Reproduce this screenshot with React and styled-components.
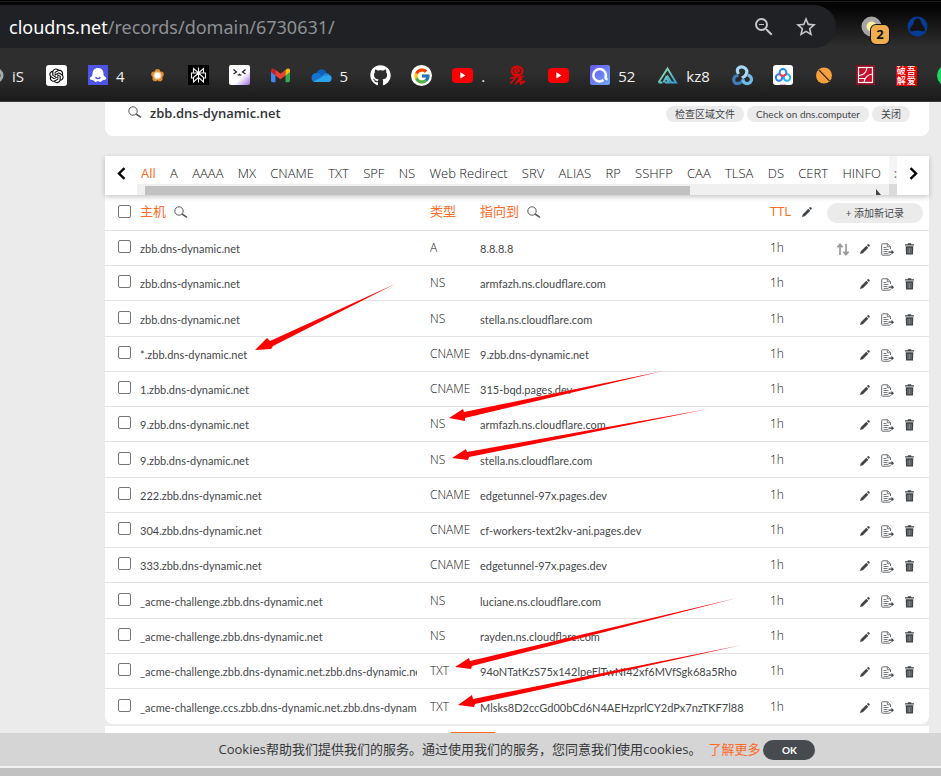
import React from "react";
import styled, { createGlobalStyle, css } from "styled-components";
import { AiOutlineOpenAI } from "react-icons/ai";
import { FaGithub } from "react-icons/fa";
import { FcGoogle } from "react-icons/fc";
import { MdZoomOut, MdOutlineStarBorder } from "react-icons/md";

const cjk = '"Noto Sans CJK SC", sans-serif';
const orange = "#ff6a24";
const ink = "#45484b";

const GlobalStyle = createGlobalStyle`
  * { box-sizing: border-box; }
  body { margin: 0; background: #ebebeb; color: ${ink}; font-family: Lato, ${cjk}; }
  button { border: 0; padding: 0; background: none; color: inherit; font: inherit; cursor: pointer; }
  svg { display: block; flex: none; }
`;

const Page = styled.div`
  position: relative;
  display: flex;
  flex-direction: column;
  height: 100vh;
  overflow: hidden;
`;

/* Browser chrome */

const Chrome = styled.header`
  flex: none;
  font-family: "Open Sans", ${cjk};
  background: linear-gradient(#000 0, #060606 8px, #2e2e2e 46px, #2e2e2e 72px, #1b1b1b 100%);
  border-top: 1px solid #000;
  border-bottom: 1px solid #3a3838;
`;

const TabStrip = styled.div`
  height: 4px;
  background: #050505;
  border-top: 1px solid #1d1d1d;
`;

const Toolbar = styled.div`
  display: flex;
  align-items: center;
  height: 43px;
  padding-right: 13px;
`;

const Omnibox = styled.div`
  display: flex;
  flex: 1;
  align-items: center;
  gap: 18px;
  height: 43px;
  margin-right: 25px;
  padding: 0 18px 0 9px;
  border-radius: 0 22px 22px 0;
  background: #202124;
  color: #c4c7ca;
`;

const Address = styled.div`
  flex: 1;
  color: #8d9094;
  font-family: "Noto Sans", ${cjk};
  font-size: 18px;
  line-height: 24px;
`;

const Host = styled.span`
  color: #fff;
`;

const Extensions = styled.div`
  display: flex;
  align-items: center;
  gap: 14px;
`;

const ExtensionButton = styled.button`
  position: relative;
  display: flex;
  align-items: center;
`;

const Badge = styled.span`
  position: absolute;
  left: 10px;
  top: 9px;
  width: 18px;
  height: 19px;
  border-radius: 5px;
  background: #f0ad4e;
  box-shadow: 0 0 0 1px #111;
  color: #111;
  font-size: 13px;
  font-weight: 700;
  line-height: 19px;
  text-align: center;
`;

const Bookmarks = styled.nav`
  display: flex;
  align-items: center;
  gap: 20px;
  height: 53px;
  padding-top: 2px;
  overflow: hidden;
`;

const Bookmark = styled.a`
  display: flex;
  flex: none;
  align-items: center;
  gap: 8px;
  color: #f1f1f1;
  font-size: 15px;
  line-height: 20px;
  text-decoration: none;
`;

const BookmarkLabel = styled.span`
  padding-right: 2px;
`;

/* Site content */

const Content = styled.main`
  flex: 1;
  min-height: 0;
  overflow: hidden;
  padding: 0 12px 0 105px;
`;

const DomainCard = styled.section`
  display: flex;
  align-items: flex-start;
  gap: 8px;
  height: 34px;
  padding: 4px 19px 0 23px;
  border-radius: 0 0 8px 8px;
  background: #fff;
`;

const DomainName = styled.h1`
  flex: 1;
  margin: 0;
  font-family: "Open Sans", ${cjk};
  font-size: 13px;
  font-weight: 600;
  line-height: 14px;
  color: #303336;
`;

const PillGroup = styled.div`
  display: flex;
  gap: 3px;
`;

const Pill = styled.button`
  height: ${(p) => (p.$tall ? 20 : 16)}px;
  padding: 0 ${(p) => (p.$tall ? 19 : 9)}px;
  border-radius: 10px;
  background: #ebebeb;
  color: ${ink};
  font-size: 10px;
  line-height: 16px;
  white-space: nowrap;
`;

const TypeBar = styled.nav`
  position: relative;
  display: flex;
  height: 39px;
  margin-top: 20px;
  background: #fff;
  box-shadow: 0 2px 5px rgba(0, 0, 0, 0.22);
`;

const ScrollButton = styled.button`
  display: flex;
  flex: none;
  align-items: center;
  justify-content: center;
  width: 32px;
  padding-bottom: 4px;
  color: #000;
`;

const TypeArea = styled.div`
  display: flex;
  flex: 1;
  flex-direction: column;
  min-width: 0;
`;

const TypeList = styled.div`
  display: flex;
  justify-content: space-between;
  gap: 8px;
  height: 28px;
  padding: 0 8px 0 4px;
  overflow: hidden;
`;

const TypeLink = styled.a`
  color: ${(p) => (p.$active ? orange : "#111315")};
  font-family: "Open Sans", ${cjk};
  font-size: 13px;
  font-weight: ${(p) => (p.$active ? 400 : 300)};
  line-height: 34px;
  text-decoration: none;
  white-space: nowrap;
`;

const ScrollTrack = styled.div`
  display: flex;
  justify-content: space-between;
  height: 11px;
  padding: 2px 8px 0 8px;
  background: #f0f0f0;
`;

const ScrollThumb = styled.div`
  width: 74%;
  background: #c1c1c1;
`;

const ScrollEdge = styled.div`
  flex: none;
  width: 8px;
  background: linear-gradient(#f5f5f5 28px, #dadada 28px);
  color: #777;
  font-size: 13px;
  line-height: 34px;
  text-align: right;
`;

const Table = styled.table`
  width: 100%;
  table-layout: fixed;
  border-collapse: separate;
  border-spacing: 0;
  border-radius: 0 0 8px 8px;
  background: #fff;
`;

const Row = styled.tr`
  height: 35px;
  &:nth-child(4n + 3) { height: 36px; }
  &:last-child > td { border-bottom: 0; }
`;

const cell = css`
  padding: 0;
  border-bottom: 1px solid #e3e3e3;
  text-align: left;
  white-space: nowrap;
`;

const HeadCell = styled.th`
  ${cell}
  width: ${(p) => p.$w || "auto"};
  height: 36px;
  color: ${orange};
  font-family: "Open Sans", ${cjk};
  font-size: 13px;
  font-weight: 400;
  line-height: 20px;
`;

const HeadLabel = styled.span`
  display: flex;
  align-items: center;
  gap: ${(p) => p.$gap || 8}px;
  padding-bottom: 4px;
  color: ${orange};
`;

const HeadIcon = styled.button`
  padding-top: 2px;
  color: ${ink};
`;

const Cell = styled.td`
  ${cell}
  padding-top: ${(p) => (p.$raised ? 0 : 2)}px;
  font-size: 11px;
  line-height: 16px;
`;

const CheckCell = styled.td`
  ${cell}
  padding: 0 0 3px 13px;
`;

const CheckPad = styled.label`
  display: block;
  padding: 0 0 2px 13px;
`;

const Clip = styled.span`
  display: block;
  margin-right: 13px;
  overflow: hidden;
`;

const TypeText = styled.span`
  color: #111315;
  font-family: "Open Sans", ${cjk};
  font-size: 12px;
  font-weight: 300;
`;

const Check = styled.input`
  display: block;
  appearance: none;
  width: 13px;
  height: 13px;
  margin: 0;
  border: 1px solid #767676;
  border-radius: 2px;
  background: #fff;
  &:checked { background: ${orange}; }
`;

const Actions = styled.div`
  display: flex;
  align-items: center;
  justify-content: flex-end;
  gap: 11px;
  padding-right: 15px;
`;

const HeadActions = styled.div`
  display: flex;
  justify-content: flex-end;
  padding: 1px 6px 0 0;
`;

const NextCard = styled.section`
  display: flex;
  align-items: flex-end;
  height: 14px;
  margin-top: 2px;
  padding: 0 345px;
  background: #fff;
`;

const Accent = styled.div`
  width: 46px;
  height: 8px;
  border-radius: 2px 2px 0 0;
  background: ${orange};
`;

const CookieBar = styled.footer`
  display: flex;
  flex: none;
  align-items: center;
  justify-content: center;
  gap: 3px;
  height: 33px;
  padding: 0 12px 2px 105px;
  background: #d5d5d5;
  color: #36393b;
  font-family: "Open Sans", ${cjk};
  font-size: 13px;
  line-height: 20px;
  white-space: nowrap;
`;

const MoreLink = styled.a`
  margin-left: 4px;
  color: ${orange};
  text-decoration: none;
`;

const OkButton = styled.button`
  width: 52px;
  height: 20px;
  margin-top: 2px;
  border-radius: 10px;
  background: #474b4f;
  color: #fff;
  font-family: Lato, ${cjk};
  font-size: 10px;
  font-weight: 700;
`;

const WindowScroll = styled.div`
  flex: none;
  height: 10px;
  border-top: 2px solid #f1f1f1;
  background: #c1c1c1;
`;

const Arrows = styled.svg`
  position: absolute;
  left: 0;
  top: 0;
  pointer-events: none;
`;

/* Small drawings */

const IconTile = styled.span`
  display: flex;
  align-items: center;
  justify-content: center;
  width: 21px;
  height: 21px;
  border-radius: ${(p) => (p.$round ? 11 : 3)}px;
  background: ${(p) => p.$bg};
`;

const Seal = styled.span`
  display: grid;
  grid-template-columns: 10px 10px;
  justify-content: center;
  width: 21px;
  height: 20px;
  background: #e60000;
  color: #fff;
  font-family: ${cjk};
  font-size: 9px;
  font-weight: 500;
  line-height: 10px;
  text-align: center;
`;

const Glyph = ({ w = 21, h = 21, box = "0 0 21 21", children }) => (
  <svg width={w} height={h} viewBox={box} aria-hidden="true">{children}</svg>
);

const SearchIcon = () => (
  <Glyph w={14} h={12} box="0 0 14 12">
    <circle cx="5" cy="5" r="4.2" fill="none" stroke="#55585b" />
    <path d="M8 8l5 3.3" stroke="#55585b" strokeWidth="1.5" />
  </Glyph>
);

const PencilIcon = () => (
  <Glyph w={10} h={10} box="0 0 10 10">
    <path d="M0 10l.8-2.8L6.300 1.700l2 2L2.800 9.200zM6.900 1.100L7.800.3q.6-.4 1.200.1l.6.7q.4.6 0 1l-.8.9z" fill="#414548" />
  </Glyph>
);

const CopyIcon = () => (
  <Glyph w={13} h={13} box="0 0 13 13">
    <path d="M9.500 6V3.700L6.500 .8H1.700Q.7.8.7 1.800v9.400q0 1 1 1h6.800q1 0 1-1" fill="none" stroke="#6a6d70" />
    <path d="M6.300.8v3h3M2.500 4.500h3M2.500 6.500h5M2.500 8.500h4M2.500 10.400h5" fill="none" stroke="#6a6d70" strokeWidth=".9" />
    <path d="M7.500 8.600h3V6.800L13 9.200l-2.500 2.300V9.800h-3z" fill="#414548" />
  </Glyph>
);

const TrashIcon = () => (
  <Glyph w={9} h={12} box="0 0 9 12">
    <path d="M0 1.200h2.800V.3h3.400v.9H9v1.300H0zM.7 3.300h7.600l-.3 8.200H1z" fill="#414548" />
    <path d="M3 4.800v5.400M4.500 4.800v5.400M6 4.800v5.400" stroke="#aaadb0" strokeWidth=".6" />
  </Glyph>
);

const SwapIcon = () => (
  <Glyph w={12} h={13} box="0 0 12 13">
    <path d="M3 12V2M.4 4.400L3 1.400l2.600 3M9 1v10M6.400 8.600l2.600 3 2.600-3" fill="none" stroke="#9b9b9b" strokeWidth="1.700" />
  </Glyph>
);

const Chevron = ({ d }) => (
  <Glyph w={9} h={13} box="0 0 9 13">
    <path d={d} fill="none" stroke="#000" strokeWidth="2.400" />
  </Glyph>
);

const YouTube = () => (
  <Glyph>
    <rect y="3" width="21" height="15" rx="4" fill="#f00" />
    <path d="M8.300 7.200v6.400l5.300-3.200z" fill="#fff" />
  </Glyph>
);

const OpenAi = () => (
  <IconTile $bg="#fff"><AiOutlineOpenAI size={19} color="#111" /></IconTile>
);

const Ghost = () => (
  <Glyph>
    <rect x="1" width="20" height="20" fill="#4f54e8" />
    <path d="M11 3c3.600 0 5.500 2.500 5.500 5.500 0 1.800.5 2.800 1.500 3.300 1.600.8 1.800 2.700 0 3-1.200.2-2 .2-2.800 1-.8.9-1.600 1.500-2.600.9-.6-.4-1-.4-1.600-.4s-1 0-1.600.4c-1 .6-1.800 0-2.600-.9-.8-.8-1.600-.8-2.800-1-1.800-.3-1.600-2.200 0-3 1-.5 1.500-1.500 1.500-3.300C5.500 5.500 7.400 3 11 3z" fill="#fff" />
    <path d="M8.500 12.300q2.500 2.600 5 0" fill="none" stroke="#4f54e8" strokeWidth="1.400" />
  </Glyph>
);

const Flower = () => (
  <Glyph>
    <g fill="#e08a2c">
      <circle cx="10.500" cy="6.800" r="2.800" /><circle cx="14" cy="9.300" r="2.800" /><circle cx="12.800" cy="13.400" r="2.800" />
      <circle cx="8.200" cy="13.400" r="2.800" /><circle cx="7" cy="9.300" r="2.800" />
    </g>
    <circle cx="10.500" cy="10.500" r="4" fill="#f3c79a" /><circle cx="10.500" cy="10.500" r="2.800" fill="#fff" />
  </Glyph>
);

const Perplexity = () => (
  <Glyph>
    <rect width="21" height="20" fill="#000" />
    <path d="M10.500 2.500v15M10.500 8L5.500 3.500V8M10.500 8l5-4.500V8M5.500 13H3.500V8h14v5h-2M10.500 8l-5 4.500v4.500l5-4.500M10.500 8l5 4.500v4.500l-5-4.500" fill="none" stroke="#f2f2f2" strokeWidth="1.100" />
  </Glyph>
);

const Face = () => (
  <Glyph>
    <defs><linearGradient id="face" x1="0" y1="0" x2="1" y2="1"><stop offset=".6" stopColor="#fff" /><stop offset="1" stopColor="#9a6ee0" /></linearGradient></defs>
    <rect width="21" height="20" rx="2" fill="url(#face)" />
    <path d="M4.500 4.500l3 2.500-3 2M16.500 4.500l-3 2.500 3 2M8.800 9.500q.8 1.300 1.700 0 .9 1.300 1.700 0" fill="none" stroke="#25243a" strokeWidth="1.300" />
  </Glyph>
);

const Gmail = () => (
  <Glyph>
    <path d="M1 6v9.500q0 1.800 1.500 1.800h3V9z" fill="#4285f4" />
    <path d="M15.500 9v8.300h3q1.500 0 1.500-1.800V6z" fill="#34a853" />
    <path d="M1 5q.5-2 3-1.200L5.500 5v5.500L1 7z" fill="#c5221f" />
    <path d="M5.500 4.800l5 4 5-4v5.600l-5 3.900-5-3.900z" fill="#ea4335" />
    <path d="M15.500 5L17 3.800Q19.500 3 20 5v2l-4.500 3.500z" fill="#fbbc04" />
  </Glyph>
);

const OneDrive = () => (
  <Glyph>
    <path d="M5.500 8C7 3.500 13.500 2.500 15.500 8l-4 4-6-3z" fill="#0f5fb8" />
    <path d="M5.500 8C2 8 .5 10.500.5 13q0 2.500 2 4L12 11 8 8.500Q7 8 5.500 8z" fill="#1673d1" />
    <path d="M11.500 10.500C13 8 17.500 7 19 10.500l-4 2z" fill="#1b86dc" />
    <path d="M2.500 16.500L12 11l7-.8c2.800 1.200 2 6.800-1.500 6.800H4.500q-1.200 0-2-.5z" fill="#2aa4ea" />
  </Glyph>
);

const RedSnake = () => (
  <Glyph>
    <g fill="none" stroke="#e30505" strokeWidth="2">
      <path d="M7 10Q3.500 7 5.500 3.500 7 1.500 10 1.500t5 2.500q1.500 3.500-2 6z" />
      <path d="M7.500 6h5Q12 3.500 10 3.500T7.500 6q0 2.500 4 2" strokeWidth="1.500" />
      <path d="M3 13.500l5-1.500h7l1.500-1M3.500 18.500l5-5.500M8 19.500l5.500-7M15 13.500l-3 2.500q3 2 4 0M13 19.500l5-3.500" strokeWidth="1.700" />
    </g>
  </Glyph>
);

const Ring = () => (
  <Glyph>
    <defs><linearGradient id="ring" x1="0" y1="0" x2="1" y2="1"><stop stopColor="#6655ee" /><stop offset="1" stopColor="#6fa6f5" /></linearGradient></defs>
    <rect x="1" width="20" height="20" rx="2" fill="url(#ring)" />
    <path d="M18.500 14q-1.800.3-2-1.500 1-3-.3-5A6.200 6.200 0 1 0 14.500 15" fill="none" stroke="#fff" strokeWidth="2.500" />
  </Glyph>
);

const Peak = () => (
  <Glyph>
    <defs><linearGradient id="peak" x1="0" y1="0" x2="1" y2="1"><stop offset=".3" stopColor="#7fd6b5" /><stop offset="1" stopColor="#2f9ed6" /></linearGradient></defs>
    <path d="M1.500 17.500l9-14 8.500 14h-4.500L10 10.500M8 17.500h4l-3-5-2.500 5M1.500 17.500h4" fill="none" stroke="url(#peak)" strokeWidth="1.900" />
  </Glyph>
);

const Knot = () => (
  <Glyph>
    <g fill="none" strokeWidth="3.200">
      <path d="M6.500 9Q4 4.500 7 2.700t6.500.8Q16.500 7 13 11l-3 2" stroke="#a9daf5" />
      <path d="M6.500 10.500q-5 .5-4.800 4.500T6.500 18.300q3.500-.3 5-4.300" stroke="#3f7cb8" />
      <path d="M11 14.500q0 3.500 3.500 4t5-3.500q0-4-4-5" stroke="#6fbbe8" />
    </g>
  </Glyph>
);

const Cloud = () => (
  <Glyph>
    <rect width="20" height="20" rx="3" fill="#fff" />
    <g fill="none" strokeWidth="2">
      <circle cx="6" cy="12.500" r="3.200" stroke="#2b7bf5" /><circle cx="14" cy="12.500" r="3.200" stroke="#22b5f0" />
      <circle cx="10" cy="7.500" r="3.400" stroke="#1f8af7" /><path d="M6.800 8.500q.8 2.400 3.200 2.400t3.200-2.400" stroke="#f0455c" />
    </g>
    <path d="M7 19.500h6" stroke="#f7a8b2" />
  </Glyph>
);

const Orb = () => (
  <Glyph>
    <circle cx="10" cy="10.500" r="8" fill="#f9a03c" />
    <path d="M5 5l10.500 11" stroke="#3a2b18" strokeWidth="1.200" />
  </Glyph>
);

const RedPanel = () => (
  <Glyph>
    <rect x="1" width="19" height="20" fill="#8d0f22" />
    <rect x="3.500" y="2.500" width="14" height="15" fill="#c6112b" stroke="#fff" strokeWidth="1.200" />
    <path d="M4 10.500q7-.5 8-8M9 17.500q1-7.500 8.500-8.500M4 13.500h6" fill="none" stroke="#fff" strokeWidth="1.200" />
  </Glyph>
);

const GreyEdge = () => (
  <Glyph w={4} box="0 0 4 21"><circle cx="-4" cy="10.500" r="6" fill="none" stroke="#a8abae" strokeWidth="3" /></Glyph>
);

const GreenEdge = () => <IconTile $round $bg="#1ed760" />;

const SealIcon = () => (
  <Seal><span>破</span><span>吾</span><span>解</span><span>爱</span></Seal>
);

const GithubIcon = () => <FaGithub size={21} color="#fff" />;

const GoogleIcon = () => <IconTile $round $bg="#fff"><FcGoogle size={18} /></IconTile>;

const bookmarks = [
  [GreyEdge, "iS"], [OpenAi], [Ghost, "4"], [Flower], [Perplexity], [Face], [Gmail], [OneDrive, "5"],
  [GithubIcon], [GoogleIcon], [YouTube, "."], [RedSnake], [YouTube], [Ring, "52"], [Peak, "kz8"],
  [Knot], [Cloud], [Orb], [RedPanel], [SealIcon], [GreenEdge],
];

const types = ["All", "A", "AAAA", "MX", "CNAME", "TXT", "SPF", "NS", "Web Redirect", "SRV", "ALIAS", "RP", "SSHFP", "CAA", "TLSA", "DS", "CERT", "HINFO"];

const records = [
  ["zbb.dns-dynamic.net", "A", "8.8.8.8"],
  ["zbb.dns-dynamic.net", "NS", "armfazh.ns.cloudflare.com"],
  ["zbb.dns-dynamic.net", "NS", "stella.ns.cloudflare.com"],
  ["*.zbb.dns-dynamic.net", "CNAME", "9.zbb.dns-dynamic.net"],
  ["1.zbb.dns-dynamic.net", "CNAME", "315-bqd.pages.dev"],
  ["9.zbb.dns-dynamic.net", "NS", "armfazh.ns.cloudflare.com"],
  ["9.zbb.dns-dynamic.net", "NS", "stella.ns.cloudflare.com"],
  ["222.zbb.dns-dynamic.net", "CNAME", "edgetunnel-97x.pages.dev"],
  ["304.zbb.dns-dynamic.net", "CNAME", "cf-workers-text2kv-ani.pages.dev"],
  ["333.zbb.dns-dynamic.net", "CNAME", "edgetunnel-97x.pages.dev"],
  ["_acme-challenge.zbb.dns-dynamic.net", "NS", "luciane.ns.cloudflare.com"],
  ["_acme-challenge.zbb.dns-dynamic.net", "NS", "rayden.ns.cloudflare.com"],
  ["_acme-challenge.zbb.dns-dynamic.net.zbb.dns-dynamic.net", "TXT", "94oNTatKzS75x142lpeElTwNI42xf6MVfSgk68a5Rho"],
  ["_acme-challenge.ccs.zbb.dns-dynamic.net.zbb.dns-dynam", "TXT", "Mlsks8D2ccGd00bCd6N4AEHzprlCY2dPx7nzTKF7l88"],
];

const arrows = [
  "255,350 267,338 270,341 395,284 273,346 271,349",
  "449,418 463,409 464,412 663,371 465,418 465,421",
  "452,458 466,449 467,452 708,409 469,457 468,460",
  "455,667 469,658 470,661 737,598 472,666 471,669",
  "458,705 472,695 473,699 742,645 475,704 474,707",
];

export default function App() {
  return (
    <Page>
      <GlobalStyle />
      <Chrome>
        <TabStrip />
        <Toolbar>
          <Omnibox>
            <Address><Host>cloudns.net</Host>/records/domain/6730631/</Address>
            <button aria-label="Zoom"><MdZoomOut size={24} /></button>
            <button aria-label="Bookmark this page"><MdOutlineStarBorder size={24} /></button>
          </Omnibox>
          <Extensions>
            <ExtensionButton aria-label="Extension, 2 items">
              <Glyph w={32} box="0 0 32 21">
                <circle cx="10.500" cy="10.500" r="7.500" fill="#fdf0a0" stroke="#a5a5a5" strokeWidth="5" />
              </Glyph>
              <Badge>2</Badge>
            </ExtensionButton>
            <ExtensionButton aria-label="Assistant">
              <Glyph>
                <circle cx="10.500" cy="10.500" r="10" fill="#063b96" />
                <path d="M10.500 2.500c3 0 3.300 2.500 4.200 5 .7 2 3.300 4.200 3.300 6.300 0 1.700-1.700 1.900-3.300 1.300q-4.200-1-8.400 0c-1.600.6-3.300.4-3.300-1.300 0-2.100 2.600-4.300 3.300-6.300.9-2.500 1.200-5 4.200-5z" fill="#131313" />
              </Glyph>
            </ExtensionButton>
          </Extensions>
        </Toolbar>
        <Bookmarks aria-label="Bookmarks">
          {bookmarks.map(([Icon, label], i) => (
            <Bookmark href="#" key={i}>
              <Icon />
              {label && <BookmarkLabel>{label}</BookmarkLabel>}
            </Bookmark>
          ))}
        </Bookmarks>
      </Chrome>

      <Content>
        <DomainCard>
          <SearchIcon />
          <DomainName>zbb.dns-dynamic.net</DomainName>
          <PillGroup>
            <Pill>检查区域文件</Pill>
            <Pill>Check on dns.computer</Pill>
            <Pill>关闭</Pill>
          </PillGroup>
        </DomainCard>

        <TypeBar aria-label="Record types">
          <ScrollButton aria-label="Scroll left"><Chevron d="M7.500 1.200L2 6.500l5.500 5.300" /></ScrollButton>
          <TypeArea>
            <TypeList>
              {types.map((t, i) => <TypeLink href="#" key={t} $active={i === 0}>{t}</TypeLink>)}
            </TypeList>
            <ScrollTrack>
              <ScrollThumb />
              <Glyph w={6} h={9} box="0 0 6 9"><path d="M1 3v6h5z" fill="#444" /></Glyph>
            </ScrollTrack>
          </TypeArea>
          <ScrollEdge>:</ScrollEdge>
          <ScrollButton aria-label="Scroll right"><Chevron d="M1.500 1.200L7 6.500l-5.500 5.300" /></ScrollButton>
        </TypeBar>

        <Table>
          <thead>
            <tr>
              <HeadCell $w="35px">
                <CheckPad><Check type="checkbox" aria-label="Select all records" /></CheckPad>
              </HeadCell>
              <HeadCell><HeadLabel>主机<HeadIcon aria-label="Search hosts"><SearchIcon /></HeadIcon></HeadLabel></HeadCell>
              <HeadCell $w="50px"><HeadLabel>类型</HeadLabel></HeadCell>
              <HeadCell><HeadLabel>指向到<HeadIcon aria-label="Search targets"><SearchIcon /></HeadIcon></HeadLabel></HeadCell>
              <HeadCell $w="50px"><HeadLabel $gap={11}>TTL<HeadIcon aria-label="Edit TTL"><PencilIcon /></HeadIcon></HeadLabel></HeadCell>
              <HeadCell $w="109px"><HeadActions><Pill $tall>+ 添加新记录</Pill></HeadActions></HeadCell>
            </tr>
          </thead>
          <tbody>
            {records.map(([host, type, target], i) => (
              <Row key={i}>
                <CheckCell><Check type="checkbox" aria-label={`Select ${host} ${type}`} /></CheckCell>
                <Cell><Clip>{host}</Clip></Cell>
                <Cell $raised><TypeText>{type}</TypeText></Cell>
                <Cell>{target}</Cell>
                <Cell $raised><TypeText>1h</TypeText></Cell>
                <Cell>
                  <Actions>
                    {i === 0 && <button aria-label="Failover"><SwapIcon /></button>}
                    <button aria-label="Edit"><PencilIcon /></button>
                    <button aria-label="Copy"><CopyIcon /></button>
                    <button aria-label="Delete"><TrashIcon /></button>
                  </Actions>
                </Cell>
              </Row>
            ))}
          </tbody>
        </Table>
        <NextCard><Accent /></NextCard>
      </Content>

      <CookieBar>
        <span>Cookies帮助我们提供我们的服务。通过使用我们的服务，您同意我们使用cookies。</span>
        <MoreLink href="#">了解更多</MoreLink>
        <OkButton>OK</OkButton>
      </CookieBar>
      <WindowScroll />

      <Arrows width="941" height="776" viewBox="0 0 941 776" aria-hidden="true">
        {arrows.map((points) => <polygon key={points} points={points} fill="#fe0000" />)}
      </Arrows>
    </Page>
  );
}
